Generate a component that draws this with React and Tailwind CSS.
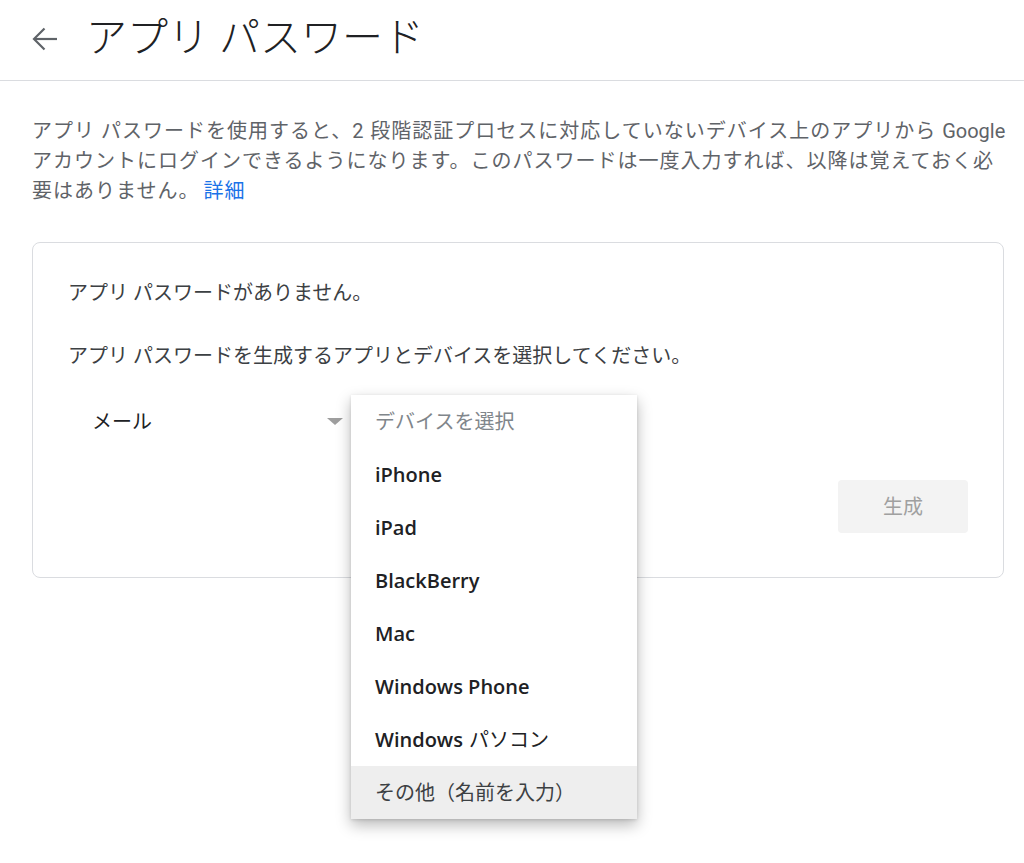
import React from "react";

const devices = [
  { label: "iPhone" },
  { label: "iPad" },
  { label: "BlackBerry" },
  { label: "Mac" },
  { label: "Windows Phone" },
  { label: "Windows", jp: "パソコン" },
];

const jp = { fontFamily: 'Roboto, "Noto Sans CJK JP", sans-serif' };

function BackArrow() {
  return (
    <svg width="26" height="24" viewBox="0 0 26 24" fill="none" stroke="#5f6368" strokeWidth="2.2">
      <path d="M25 12H2.5" />
      <path d="M12.5 1.5 2 12l10.5 10.5" />
    </svg>
  );
}

function DeviceMenu() {
  return (
    <div className="absolute left-0 top-0 z-10 w-[286px] bg-white shadow-[0_6px_14px_rgba(0,0,0,0.28),0_1px_3px_rgba(0,0,0,0.12)]">
      <div className="flex h-[53px] items-center px-6 text-[20px] text-[#80868b]">デバイスを選択</div>
      {devices.map((d) => (
        <div
          key={d.label}
          className="flex h-[53px] items-center px-6 text-[20px] font-semibold text-[#202124]"
          style={{ fontFamily: '"Open Sans", "Noto Sans CJK JP", sans-serif' }}
        >
          {d.label}
          {d.jp && <span className="ml-[6px] font-normal">{d.jp}</span>}
        </div>
      ))}
      <div className="flex h-[53px] items-center bg-[#eeeeee] px-6 text-[20px] text-[#3c4043]">その他（名前を入力）</div>
    </div>
  );
}

export default function App() {
  return (
    <div className="min-h-screen bg-white" style={jp}>
      <header className="flex h-[81px] items-center border-b border-[#dadce0] pl-8">
        <div className="-mt-[2px]">
          <BackArrow />
        </div>
        <h1 className="ml-[28px] -mt-[4px] text-[41px] font-light leading-none text-[#202124]">アプリ パスワード</h1>
      </header>

      <main className="pl-8 pr-5 pt-[35px]">
        <p className="whitespace-nowrap text-[20px] leading-[30px] tracking-[1px] text-[#5f6368]">
          アプリ パスワードを使用すると、2 段階認証プロセスに対応していないデバイス上のアプリから{" "}
          <span className="tracking-normal">Google</span>
          <br />
          アカウントにログインできるようになります。このパスワードは一度入力すれば、以降は覚えておく必
          <br />
          要はありません。<a href="#" className="ml-1 text-[#1a73e8]">詳細</a>
        </p>

        <section className="mt-[36px] rounded-lg border border-[#dadce0] px-[35px] pb-[44px] pt-[35px]">
          <p className="text-[20px] leading-[30px] text-[#3c4043]">アプリ パスワードがありません。</p>
          <p className="mt-[33px] text-[20px] leading-[30px] text-[#3c4043]">
            アプリ パスワードを生成するアプリとデバイスを選択してください。
          </p>

          <div className="mt-[24px] flex h-[53px]">
            <div className="flex w-[283px] items-center justify-between pl-6 pr-2">
              <span className="text-[20px] text-[#202124]">メール</span>
              <span className="h-0 w-0 border-x-[8px] border-t-[7px] border-x-transparent border-t-[#9e9e9e]" />
            </div>
            <div className="relative w-[286px]">
              <DeviceMenu />
            </div>
          </div>

          <div className="mt-[32px] flex justify-end">
            <button className="h-[53px] w-[130px] rounded bg-[#f3f3f3] text-[20px] text-[#a0a0a0]">生成</button>
          </div>
        </section>
      </main>
    </div>
  );
}
